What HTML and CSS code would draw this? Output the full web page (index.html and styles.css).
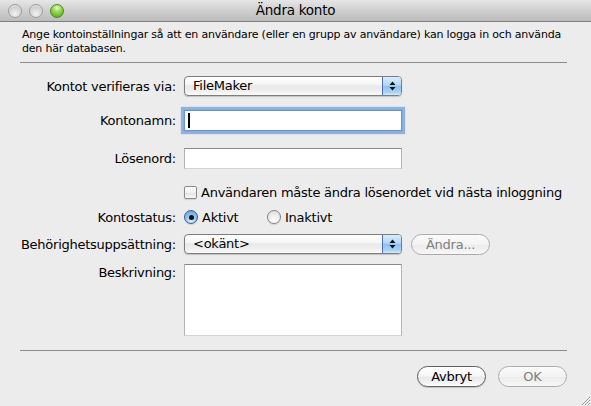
FILE: index.html
```html
<!DOCTYPE html>
<html lang="sv">
<head>
<meta charset="utf-8">
<title>Ändra konto</title>
<link rel="stylesheet" href="styles.css">
</head>
<body>
<div class="window">
  <div class="titlebar">
    <div class="lights">
      <span class="light light-off"></span>
      <span class="light light-off"></span>
      <span class="light light-green"></span>
    </div>
    <div class="title">Ändra konto</div>
  </div>

  <div class="content">
    <p class="intro">Ange kontoinställningar så att en användare (eller en grupp av användare) kan logga in och använda<br>den här databasen.</p>
    <div class="sep"></div>

    <div class="form">
      <div class="row row-auth">
        <div class="label">Kontot verifieras via:</div>
        <div class="popup">
          <span class="popup-text">FileMaker</span>
          <span class="popup-arrows"><svg width="7" height="12" viewBox="0 0 7 12"><path d="M3.5 1.5 L6.5 5 H0.5Z M0.5 7 H6.5 L3.5 10.5Z" fill="#111"/></svg></span>
        </div>
      </div>

      <div class="row row-name">
        <div class="label">Kontonamn:</div>
        <div class="field field-focus"><span class="caret"></span></div>
      </div>

      <div class="row row-pass">
        <div class="label">Lösenord:</div>
        <div class="field"></div>
      </div>

      <div class="row row-check">
        <div class="label"></div>
        <div class="option">
          <span class="checkbox"></span>
          <span>Användaren måste ändra lösenordet vid nästa inloggning</span>
        </div>
      </div>

      <div class="row row-status">
        <div class="label">Kontostatus:</div>
        <div class="option option-first">
          <span class="radio radio-on"></span>
          <span>Aktivt</span>
        </div>
        <div class="option">
          <span class="radio"></span>
          <span>Inaktivt</span>
        </div>
      </div>

      <div class="row row-priv">
        <div class="label">Behörighetsuppsättning:</div>
        <div class="popup">
          <span class="popup-text">&lt;okänt&gt;</span>
          <span class="popup-arrows"><svg width="7" height="12" viewBox="0 0 7 12"><path d="M3.5 1.5 L6.5 5 H0.5Z M0.5 7 H6.5 L3.5 10.5Z" fill="#111"/></svg></span>
        </div>
        <div class="button button-disabled button-edit">Ändra...</div>
      </div>

      <div class="row row-desc">
        <div class="label">Beskrivning:</div>
        <div class="textarea"></div>
      </div>
    </div>

    <div class="sep sep-bottom"></div>

    <div class="buttons">
      <div class="button">Avbryt</div>
      <div class="button button-disabled">OK</div>
    </div>
  </div>

  <svg class="grip" width="10" height="10" viewBox="0 0 10 10">
    <path d="M10 2 L2 10 M10 5 L5 10 M10 8 L8 10" stroke="#9a9a9a" stroke-width="1"/>
    <path d="M10 3 L3 10 M10 6 L6 10" stroke="#ffffff" stroke-width="0.8"/>
  </svg>
</div>
</body>
</html>
```

FILE: styles.css
```css
* { box-sizing: border-box; }

html, body {
  margin: 0;
  padding: 0;
  background: #ececec;
}

body {
  font-family: "DejaVu Sans", "Liberation Sans", sans-serif;
  font-size: 13px;
  letter-spacing: -0.25px;
  color: #000;
}

.window {
  position: relative;
  width: 591px;
  height: 406px;
  background: #ececec;
  overflow: hidden;
}

/* Title bar */
.titlebar {
  position: relative;
  height: 22px;
  background: linear-gradient(#e6e6e6, #cfcfcf 50%, #bcbcbc);
  border-bottom: 1px solid #808080;
  display: flex;
  align-items: center;
}

.lights {
  display: flex;
  gap: 7px;
  padding-left: 8px;
}

.light {
  width: 14px;
  height: 14px;
  border-radius: 50%;
  display: block;
}

.light-off {
  background: radial-gradient(circle at 50% 75%, #f2f2f2 0%, #d9d9d9 45%, #bdbdbd 100%);
  border: 1px solid #9c9c9c;
  box-shadow: inset 0 1px 1px rgba(255,255,255,.6);
}

.light-green {
  background: radial-gradient(circle at 50% 25%, #e9ffd2 0%, #a5e062 30%, #6fbd2b 70%, #4f9a1c 100%);
  border: 1px solid #4c8a22;
}

.title {
  position: absolute;
  left: 0;
  right: 0;
  top: 0;
  height: 21px;
  line-height: 21px;
  text-align: center;
  font-size: 13.5px;
}

/* Content */
.content {
  padding: 0 24px 0 20px;
}

.intro {
  margin: 6px 0 0 2px;
  font-size: 11px;
  line-height: 14px;
  letter-spacing: -0.2px;
}

.sep {
  height: 1px;
  background: #8c8c8c;
  margin-top: 6px;
}

.sep-bottom {
  margin-top: 14px;
}

.form {
  display: flex;
  flex-direction: column;
  margin-left: -20px;
}

.row {
  display: flex;
  align-items: center;
  gap: 8px;
}

.label {
  width: 176px;
  flex: none;
  text-align: right;
}

.row-auth { margin-top: 13px; height: 20px; }
.row-name { margin-top: 14px; height: 21px; }
.row-pass { margin-top: 17px; height: 21px; }
.row-check { margin-top: 16px; height: 14px; }
.row-status { margin-top: 11px; height: 14px; }
.row-priv { margin-top: 10px; height: 20px; }
.row-desc { margin-top: 10px; align-items: flex-start; }
.row-desc .label { padding-top: 1px; }

/* Popup */
.popup {
  display: flex;
  width: 218px;
  height: 20px;
  border: 1px solid #7d7d7d;
  border-radius: 4px;
  overflow: hidden;
  background: linear-gradient(#ffffff 0%, #f6f6f6 40%, #e9e9e9 50%, #eeeeee 75%, #fbfbfb 100%);
  box-shadow: 0 1px 1px rgba(0,0,0,0.18);
}

.popup-text {
  flex: 1;
  padding-left: 8px;
  line-height: 18px;
}

.popup-arrows {
  width: 19px;
  flex: none;
  display: flex;
  align-items: center;
  justify-content: center;
  border-left: 1px solid #4d6fae;
  background: linear-gradient(#d9ebfc 0%, #b6d6f7 45%, #8fc2f1 52%, #a7d3f6 85%, #d3ecfd 100%);
}

/* Text fields */
.field {
  width: 218px;
  height: 21px;
  background: #fff;
  border: 1px solid #b4b4b4;
  border-top-color: #8a8a8a;
  border-bottom-color: #d2d2d2;
  display: flex;
  align-items: center;
  padding-left: 3px;
}

.field-focus {
  border-color: #6f94c8;
  box-shadow: 0 0 0 1px #86acdf, 0 0 1px 3px rgba(112, 160, 222, 0.75);
}

.caret {
  width: 1.5px;
  height: 15px;
  background: #000;
}

.textarea {
  width: 218px;
  height: 72px;
  background: #fff;
  border: 1px solid #b4b4b4;
  border-top-color: #8a8a8a;
  border-bottom-color: #d2d2d2;
}

/* Checkbox and radio */
.option {
  display: flex;
  align-items: center;
  gap: 4px;
  white-space: nowrap;
}

.option-first {
  width: 83px;
  flex: none;
}

.row-status {
  gap: 0;
}

.row-status .label {
  margin-right: 8px;
}

.checkbox {
  width: 13px;
  height: 13px;
  flex: none;
  border: 1px solid #8a8a8a;
  border-radius: 2px;
  background: linear-gradient(#ffffff, #f0f0f0 50%, #e2e2e2 55%, #fafafa);
  box-shadow: 0 1px 1px rgba(0,0,0,0.12);
}

.radio {
  width: 14px;
  height: 14px;
  flex: none;
  border-radius: 50%;
  border: 1px solid #858585;
  background: radial-gradient(circle at 50% 80%, #ffffff 0%, #f1f1f1 40%, #d8d8d8 100%);
  box-shadow: 0 1px 1px rgba(0,0,0,0.12);
}

.radio-on {
  position: relative;
  border-color: #3f5f8f;
  background: radial-gradient(circle at 50% 85%, #d6eeff 0%, #92c6f3 45%, #5f9fdc 100%);
}

.radio-on::after {
  content: "";
  position: absolute;
  left: 3.5px;
  top: 3.5px;
  width: 5px;
  height: 5px;
  border-radius: 50%;
  background: #111;
}

/* Buttons */
.button {
  width: 69px;
  height: 21px;
  border: 1px solid #5e5e5e;
  border-radius: 11px;
  background: linear-gradient(#ffffff 0%, #f7f7f7 45%, #e9e9e9 55%, #f4f4f4 85%, #ffffff 100%);
  box-shadow: 0 1px 1px rgba(0,0,0,0.18);
  text-align: center;
  line-height: 19px;
  flex: none;
}

.button-disabled {
  border-color: #acacac;
  color: #808080;
  box-shadow: none;
  background: linear-gradient(#fbfbfb 0%, #f3f3f3 50%, #ececec 55%, #f7f7f7 100%);
}

.button-edit {
  width: 79px;
  margin-left: 1px;
}

.buttons {
  display: flex;
  justify-content: flex-end;
  gap: 12px;
  margin-top: 15px;
}

/* Resize grip */
.grip {
  position: absolute;
  right: 1px;
  bottom: 1px;
}
```
